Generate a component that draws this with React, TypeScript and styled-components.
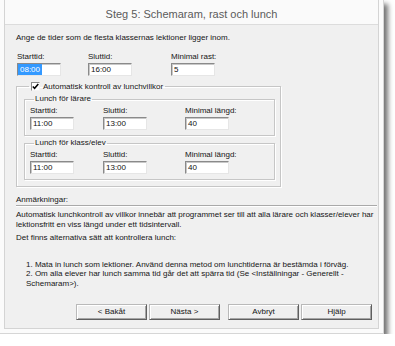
import React from "react";
import styled, { createGlobalStyle } from "styled-components";

const Global = createGlobalStyle`
  html, body { margin: 0; padding: 0; background: #ffffff; }
  body {
    font-family: "Liberation Sans", Arial, sans-serif;
    font-size: 8px;
    color: #151515;
  }
  * { box-sizing: border-box; }
`;

const Window = styled.div`
  width: 384px;
  height: 334px;
  background: #fbfbfb;
  padding: 0 4px 4px 4px;
  border-right: 1px solid #d6d6d6;
  border-bottom: 1px solid #d6d6d6;
  box-shadow: 4px 4px 5px rgba(0, 0, 0, 0.55);
  display: flex;
`;

const Panel = styled.div`
  flex: 1;
  display: flex;
  flex-direction: column;
  border: 1px solid #d4d4d4;
  border-top: none;
  background: #f0f0f0;
`;

const TitleBar = styled.div`
  height: 25px;
  padding-top: 3px;
  line-height: 22px;
  background: #fafafa;
  border-bottom: 1px solid #dcdcdc;
  text-align: center;
  font-size: 11px;
  color: #5a5a5a;
`;

const Content = styled.div`
  flex: 1;
  display: flex;
  flex-direction: column;
  padding: 8px 1px 8px 11px;
`;

const Text = styled.div`
  line-height: 10px;
  white-space: nowrap;
`;

const FieldRow = styled.div<{ $cols: string }>`
  display: grid;
  grid-template-columns: ${(p) => p.$cols};
`;

const TopRow = styled(FieldRow)`
  margin-top: 9px;
  padding-left: 1px;
`;

const Field = styled.div`
  display: flex;
  flex-direction: column;
`;

const Label = styled.div`
  line-height: 10px;
  white-space: nowrap;
`;

const TextBox = styled.div`
  width: 44px;
  height: 13px;
  margin-top: 1px;
  background: #ffffff;
  border: 1px solid;
  border-color: #8a8a8a #e6e6e6 #e6e6e6 #8a8a8a;
  box-shadow: inset 1px 1px 0 #c8c8c8;
  padding: 0 2px;
  line-height: 11px;
  font-size: 8px;
  color: #111;
  white-space: nowrap;
`;

const Selected = styled.span`
  display: inline-block;
  margin-left: -2px;
  padding: 0 2px;
  height: 11px;
  background: #3399ff;
  color: #ffffff;
`;

const Group = styled.fieldset`
  margin: 0;
  min-inline-size: 0;
  border: 1px solid #c6c6c6;
  box-shadow: inset 1px 1px 0 #ffffff, 1px 1px 0 #ffffff;
`;

const OuterGroup = styled(Group)`
  width: 265px;
  margin-top: 5px;
  padding: 2px 5px 6px 7px;
`;

const InnerGroup = styled(Group)<{ $gap?: number }>`
  margin-top: ${(p) => p.$gap ?? 0}px;
  padding: 2px 4px 5px 5px;
`;

const CheckLegend = styled.legend`
  margin-left: 5px;
  padding: 0 2px;
  display: flex;
  align-items: center;
  gap: 3px;
  line-height: 11px;
  white-space: nowrap;
`;

const GroupLegend = styled.legend`
  margin-left: 4px;
  padding: 0 1px;
  line-height: 10px;
  white-space: nowrap;
`;

const CheckBox = styled.span`
  width: 9px;
  height: 9px;
  background: #ffffff;
  border: 1px solid;
  border-color: #8a8a8a #f4f4f4 #f4f4f4 #8a8a8a;
  display: flex;
  align-items: center;
  justify-content: center;
`;

const NotesHeader = styled.div`
  margin-top: 8px;
  line-height: 10px;
  border-bottom: 1px solid #a9a9a9;
  box-shadow: 0 1px 0 #ffffff;
`;

const Para = styled.div<{ $gap: number }>`
  margin-top: ${(p) => p.$gap}px;
  line-height: 9.5px;
`;

const List = styled.div`
  margin-top: 17px;
  margin-left: 10px;
  width: 345px;
  line-height: 9.5px;
`;

const ButtonBar = styled.div`
  margin-top: auto;
  display: flex;
  justify-content: flex-end;
  padding-right: 5px;
  gap: 8px;
`;

const ButtonPair = styled.div`
  display: flex;
  gap: 2px;
`;

const Button = styled.button`
  width: 71px;
  height: 16px;
  padding: 0;
  font-family: "Liberation Sans", Arial, sans-serif;
  font-size: 8px;
  color: #151515;
  background: #efefef;
  border: 1px solid;
  border-color: #b9b9b9 #5f5f5f #5f5f5f #b9b9b9;
  box-shadow: inset 1px 1px 0 #ffffff, inset -1px -1px 0 #a5a5a5;
  line-height: 14px;
`;

export default function App() {
  return (
    <>
      <Global />
      <Window>
        <Panel>
          <TitleBar>Steg 5: Schemaram, rast och lunch</TitleBar>
          <Content>
            <Text>Ange de tider som de flesta klassernas lektioner ligger inom.</Text>
            <TopRow $cols="71px 83px 44px">
              <Field>
                <Label>Starttid:</Label>
                <TextBox>
                  <Selected>08:00</Selected>
                </TextBox>
              </Field>
              <Field>
                <Label>Sluttid:</Label>
                <TextBox>16:00</TextBox>
              </Field>
              <Field>
                <Label>Minimal rast:</Label>
                <TextBox>5</TextBox>
              </Field>
            </TopRow>

            <OuterGroup>
              <CheckLegend>
                <CheckBox>
                  <svg width="7" height="7" viewBox="0 0 7 7">
                    <path d="M0.8 3.4 L2.6 5.3 L6.3 0.9" fill="none" stroke="#000" strokeWidth="1.5" />
                  </svg>
                </CheckBox>
                Automatisk kontroll av lunchvillkor
              </CheckLegend>
              <InnerGroup>
                <GroupLegend>Lunch för lärare</GroupLegend>
                <FieldRow $cols="73px 82px 44px">
                  <Field>
                    <Label>Starttid:</Label>
                    <TextBox>11:00</TextBox>
                  </Field>
                  <Field>
                    <Label>Sluttid:</Label>
                    <TextBox>13:00</TextBox>
                  </Field>
                  <Field>
                    <Label>Minimal längd:</Label>
                    <TextBox>40</TextBox>
                  </Field>
                </FieldRow>
              </InnerGroup>
              <InnerGroup $gap={2}>
                <GroupLegend>Lunch för klass/elev</GroupLegend>
                <FieldRow $cols="73px 82px 44px">
                  <Field>
                    <Label>Starttid:</Label>
                    <TextBox>11:00</TextBox>
                  </Field>
                  <Field>
                    <Label>Sluttid:</Label>
                    <TextBox>13:00</TextBox>
                  </Field>
                  <Field>
                    <Label>Minimal längd:</Label>
                    <TextBox>40</TextBox>
                  </Field>
                </FieldRow>
              </InnerGroup>
            </OuterGroup>

            <NotesHeader>Anmärkningar:</NotesHeader>
            <Para $gap={4}>
              Automatisk lunchkontroll av villkor innebär att programmet ser till att alla lärare och klasser/elever har
              lektionsfritt en viss längd under ett tidsintervall.
            </Para>
            <Para $gap={4}>Det finns alternativa sätt att kontrollera lunch:</Para>
            <List>
              1. Mata in lunch som lektioner. Använd denna metod om lunchtiderna är bestämda i förväg.
              <br />
              2. Om alla elever har lunch samma tid går det att spärra tid (Se &lt;Inställningar - Generellt -
              Schemaram&gt;).
            </List>

            <ButtonBar>
              <ButtonPair>
                <Button>&lt; Bakåt</Button>
                <Button>Nästa &gt;</Button>
              </ButtonPair>
              <ButtonPair>
                <Button>Avbryt</Button>
                <Button>Hjälp</Button>
              </ButtonPair>
            </ButtonBar>
          </Content>
        </Panel>
      </Window>
    </>
  );
}
